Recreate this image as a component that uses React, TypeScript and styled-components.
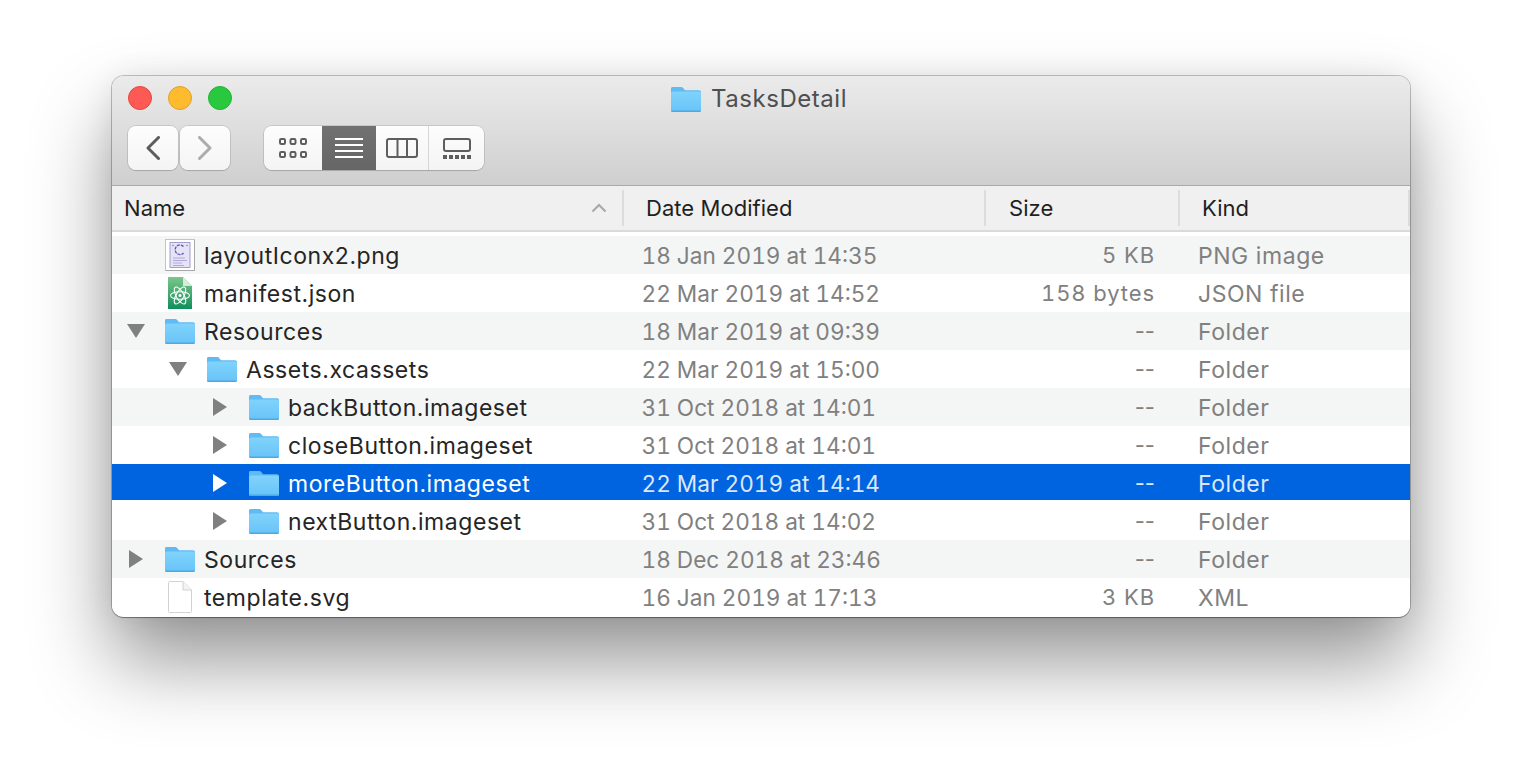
import * as React from "react";
import styled, { createGlobalStyle } from "styled-components";

const GlobalStyle = createGlobalStyle`
  html, body {
    margin: 0;
    background: #fff;
    font-family: Inter, "Noto Sans", sans-serif;
  }
`;

const Page = styled.div`
  width: 1522px;
  height: 766px;
  padding: 76px 0 0 112px;
  box-sizing: border-box;
  overflow: hidden;
`;

const Window = styled.div`
  width: 1298px;
  height: 541px;
  border-radius: 12px;
  background: #fff;
  overflow: hidden;
  box-shadow: 0 0 0 1px rgba(0, 0, 0, 0.22), 0 1px 1px rgba(0, 0, 0, 0.25);
`;

const WindowShadow = styled.div`
  width: 1298px;
  height: 541px;
  border-radius: 12px;
  box-shadow: 0 44px 80px rgba(0, 0, 0, 0.42), 0 0 30px rgba(0, 0, 0, 0.08);
`;

const TitleBar = styled.div`
  height: 110px;
  box-sizing: border-box;
  padding: 10px 16px 0;
  background: linear-gradient(#ebebeb, #cfcfcf);
  border-bottom: 1px solid #a9a9a9;
  display: flex;
  flex-direction: column;
  gap: 16px;
`;

const TitleRow = styled.div`
  display: grid;
  grid-template-columns: 1fr auto 1fr;
  grid-template-rows: 24px;
  align-items: center;
`;

const Lights = styled.div`
  display: flex;
  gap: 16px;
`;

const Light = styled.span<{ $fill: string; $edge: string }>`
  width: 24px;
  height: 24px;
  box-sizing: border-box;
  border-radius: 50%;
  background: ${(p) => p.$fill};
  border: 1px solid ${(p) => p.$edge};
`;

const Title = styled.div`
  display: flex;
  align-items: center;
  gap: 10px;
  font-size: 24px;
  line-height: 24px;
  letter-spacing: 0.55px;
  color: #4f4f4f;
  margin: 2px 0 0 -4px;
`;

const Toolbar = styled.div`
  display: flex;
  gap: 34px;
`;

const NavGroup = styled.div`
  display: flex;
  gap: 2px;
`;

const ToolButton = styled.button`
  width: 50px;
  height: 44px;
  padding: 0;
  border: 0;
  border-radius: 8px;
  background: linear-gradient(#fdfdfd, #f4f4f4);
  box-shadow: 0 0 0 1px rgba(0, 0, 0, 0.1), 0 1px 1px rgba(0, 0, 0, 0.12);
  display: flex;
  align-items: center;
  justify-content: center;
`;

const Segmented = styled.div`
  display: flex;
  height: 44px;
  border-radius: 8px;
  overflow: hidden;
  background: linear-gradient(#fdfdfd, #f4f4f4);
  box-shadow: 0 0 0 1px rgba(0, 0, 0, 0.1), 0 1px 1px rgba(0, 0, 0, 0.12);
`;

const Segment = styled.div<{ $width: number; $active?: boolean; $divider?: boolean }>`
  width: ${(p) => p.$width}px;
  box-sizing: border-box;
  display: flex;
  align-items: center;
  justify-content: center;
  background: ${(p) => (p.$active ? "linear-gradient(#717171, #666)" : "transparent")};
  border-right: ${(p) => (p.$divider ? "1px solid #d6d6d6" : "0")};
`;

const Columns = styled.div`
  display: grid;
  grid-template-columns: 512px 362px 194px 1fr;
`;

const HeaderRow = styled(Columns)`
  height: 46px;
  box-sizing: border-box;
  background: #f0f0f0;
  border-bottom: 2px solid #dadada;
  align-items: center;
`;

const HeaderCell = styled.div<{ $pad: number }>`
  height: 36px;
  box-sizing: border-box;
  padding-left: ${(p) => p.$pad}px;
  padding-right: 15px;
  border-right: 2px solid #dcdcdc;
  display: flex;
  align-items: center;
  justify-content: space-between;
  font-size: 22px;
  letter-spacing: 0.05px;
  color: #1f1f1f;
`;

const Rows = styled.div`
  padding-top: 4px;
`;

const Row = styled(Columns)<{ $alt?: boolean; $selected?: boolean }>`
  height: 38px;
  align-items: center;
  font-size: 23px;
  letter-spacing: 0.55px;
  color: ${(p) => (p.$selected ? "#fff" : "#808080")};
  background: ${(p) =>
    p.$selected
      ? "linear-gradient(#0064e1 36px, #fff 36px)"
      : p.$alt
        ? "#f4f5f5"
        : "#fff"};
`;

const NameCell = styled.div<{ $depth: number; $selected?: boolean }>`
  display: flex;
  align-items: center;
  height: 100%;
  padding-left: ${(p) => 15 + p.$depth * 42}px;
  color: ${(p) => (p.$selected ? "#fff" : "#252525")};
`;

const NameLabel = styled.span`
  margin-top: 2px;
`;

const Disclosure = styled.span<{ $open?: boolean }>`
  width: 38px;
  display: flex;
  align-items: center;
  padding-left: ${(p) => (p.$open ? 0 : 2)}px;
  box-sizing: border-box;
`;

const FileIcon = styled.span`
  width: 30px;
  height: 32px;
  display: flex;
  align-items: center;
  justify-content: center;
  margin-right: 9px;
`;

const DateCell = styled.div<{ $selected?: boolean }>`
  padding-left: 17.5px;
  font-size: 22.6px;
  font-variant-numeric: tabular-nums;
  letter-spacing: 0;
  color: ${(p) => (p.$selected ? "#dbe8fb" : "inherit")};
`;

const SizeCell = styled.div<{ $selected?: boolean }>`
  padding-right: 25px;
  text-align: right;
  font-size: 22px;
  font-variant-numeric: tabular-nums;
  letter-spacing: 0.9px;
  color: ${(p) => (p.$selected ? "#dbe8fb" : "inherit")};
`;

const Dash = styled.span`
  font-variant-numeric: normal;
  letter-spacing: 0;
`;

const KindCell = styled.div<{ $selected?: boolean }>`
  padding-left: 18px;
  margin-top: 2px;
  color: ${(p) => (p.$selected ? "#dbe8fb" : "inherit")};
`;

function FolderIcon() {
  const id = React.useId();
  return (
    <svg width="30" height="25" viewBox="0 0 30 25">
      <defs>
        <linearGradient id={id} x1="0" y1="0" x2="0" y2="1">
          <stop offset="0" stopColor="#80d3fc" />
          <stop offset="1" stopColor="#68c3f7" />
        </linearGradient>
      </defs>
      <path
        d="M1.500 0h8.500c1.200 0 1.800 0.500 2.600 1.500l1.400 1.800h14c1.200 0 2 0.800 2 2v17.700c0 1.200-0.800 2-2 2H2c-1.200 0-2-0.800-2-2V1.500C0 0.600 0.600 0 1.500 0z"
        fill="#5fbbf3"
      />
      <path
        d="M0 6.500c0-1.200 0.800-2 2-2h26c1.200 0 2 0.800 2 2V23c0 1.200-0.800 2-2 2H2c-1.200 0-2-0.800-2-2z"
        fill={`url(#${id})`}
      />
      <path d="M0 23.500h30c0 0.900-0.800 1.500-2 1.500H2c-1.200 0-2-0.600-2-1.500z" fill="#4ba9e3" />
    </svg>
  );
}

function TriangleIcon({ open, color }: { open?: boolean; color: string }) {
  return open ? (
    <svg width="18" height="14" viewBox="0 0 18 14">
      <path d="M0 0h18L9 14z" fill={color} />
    </svg>
  ) : (
    <svg width="14" height="18" viewBox="0 0 14 18">
      <path d="M0 0l14 9L0 18z" fill={color} />
    </svg>
  );
}

function PngThumb() {
  return (
    <svg width="30" height="32" viewBox="0 0 30 32">
      <rect x="0.500" y="0.500" width="29" height="31" fill="#fff" stroke="#c4c4c4" />
      <path d="M1 31.500h28.500V1" fill="none" stroke="#a8a8a8" />
      <rect x="5" y="3.500" width="20" height="25" fill="#e6e3f6" stroke="#9089c8" strokeWidth="0.800" />
      <path d="M18.500 7.500a4.800 4.800 0 1 0 0 6.500" fill="none" stroke="#5d52b5" strokeWidth="1.300" strokeDasharray="3 1" />
      <circle cx="8" cy="6.500" r="0.800" fill="#7a72c2" />
      <circle cx="22" cy="6.500" r="0.800" fill="#7a72c2" />
      <path d="M8 19h12M8 21.500h14M8 24h9M8 26.500h11" stroke="#a8a2d8" strokeWidth="0.900" />
    </svg>
  );
}

function AtomDoc() {
  const id = React.useId();
  return (
    <svg width="24" height="32" viewBox="0 0 24 32">
      <defs>
        <linearGradient id={id} x1="0" y1="0" x2="0" y2="1">
          <stop offset="0" stopColor="#7cc68c" />
          <stop offset="1" stopColor="#0f8f5a" />
        </linearGradient>
      </defs>
      <path d="M0 0h15l9 9v23H0z" fill={`url(#${id})`} />
      <path d="M15 0l9 9h-9z" fill="#d6ebd9" />
      <g fill="none" stroke="#fff" strokeWidth="1.100">
        <ellipse cx="12" cy="18.500" rx="9.500" ry="3.800" />
        <ellipse cx="12" cy="18.500" rx="9.500" ry="3.800" transform="rotate(60 12 18.500)" />
        <ellipse cx="12" cy="18.500" rx="9.500" ry="3.800" transform="rotate(120 12 18.500)" />
      </g>
      <circle cx="12" cy="18.500" r="1.500" fill="#fff" />
    </svg>
  );
}

function BlankDoc() {
  return (
    <svg width="24" height="32" viewBox="0 0 24 32">
      <path
        d="M0.500 1.500a1 1 0 0 1 1-1H15l8.500 8.500v21.500a1 1 0 0 1-1 1h-21a1 1 0 0 1-1-1z"
        fill="#fff"
        stroke="#d2d2d2"
      />
      <path d="M15 0.500V9h8.500" fill="#f3f3f3" stroke="#d2d2d2" />
    </svg>
  );
}

function Chevron({ dir, color }: { dir: "left" | "right"; color: string }) {
  return (
    <svg width="14" height="24" viewBox="0 0 14 24">
      <path
        d={dir === "left" ? "M12.500 1.500L2 12l10.500 10.500" : "M1.500 1.500L12 12 1.500 22.500"}
        fill="none"
        stroke={color}
        strokeWidth="3"
        strokeLinecap="round"
        strokeLinejoin="round"
      />
    </svg>
  );
}

function GridGlyph() {
  const cells = [0, 10.5, 21];
  return (
    <svg width="28" height="20" viewBox="0 0 28 20">
      {[0, 13].map((y) =>
        cells.map((x) => (
          <rect
            key={`${x}-${y}`}
            x={x + 1}
            y={y + 1}
            width="5"
            height="5"
            rx="1.200"
            fill="none"
            stroke="#5e5e5e"
            strokeWidth="2"
          />
        )),
      )}
    </svg>
  );
}

function ListGlyph() {
  return (
    <svg width="28" height="20" viewBox="0 0 28 20">
      <path d="M0 1h28M0 7h28M0 13h28M0 19h28" stroke="#fff" strokeWidth="2" />
    </svg>
  );
}

function ColumnGlyph() {
  return (
    <svg width="32" height="20" viewBox="0 0 32 20">
      <rect x="1" y="1" width="30" height="18" rx="2" fill="none" stroke="#5e5e5e" strokeWidth="2" />
      <path d="M11.500 1v18M21 1v18" stroke="#5e5e5e" strokeWidth="2" />
    </svg>
  );
}

function GalleryGlyph() {
  return (
    <svg width="28" height="21" viewBox="0 0 28 21">
      <rect x="1" y="1" width="26" height="12" rx="2" fill="none" stroke="#5e5e5e" strokeWidth="2" />
      {[0, 6, 12, 18, 24].map((x) => (
        <rect key={x} x={x} y="17" width="4" height="4" fill="#5e5e5e" />
      ))}
    </svg>
  );
}

type Entry = {
  name: string;
  depth: number;
  date: string;
  size: string;
  kind: string;
  icon: "folder" | "png" | "json" | "doc";
  open?: boolean;
  selected?: boolean;
};

const entries: Entry[] = [
  { name: "layoutIconx2.png", depth: 0, date: "18 Jan 2019 at 14:35", size: "5 KB", kind: "PNG image", icon: "png" },
  { name: "manifest.json", depth: 0, date: "22 Mar 2019 at 14:52", size: "158 bytes", kind: "JSON file", icon: "json" },
  { name: "Resources", depth: 0, date: "18 Mar 2019 at 09:39", size: "--", kind: "Folder", icon: "folder", open: true },
  { name: "Assets.xcassets", depth: 1, date: "22 Mar 2019 at 15:00", size: "--", kind: "Folder", icon: "folder", open: true },
  { name: "backButton.imageset", depth: 2, date: "31 Oct 2018 at 14:01", size: "--", kind: "Folder", icon: "folder" },
  { name: "closeButton.imageset", depth: 2, date: "31 Oct 2018 at 14:01", size: "--", kind: "Folder", icon: "folder" },
  { name: "moreButton.imageset", depth: 2, date: "22 Mar 2019 at 14:14", size: "--", kind: "Folder", icon: "folder", selected: true },
  { name: "nextButton.imageset", depth: 2, date: "31 Oct 2018 at 14:02", size: "--", kind: "Folder", icon: "folder" },
  { name: "Sources", depth: 0, date: "18 Dec 2018 at 23:46", size: "--", kind: "Folder", icon: "folder" },
  { name: "template.svg", depth: 0, date: "16 Jan 2019 at 17:13", size: "3 KB", kind: "XML", icon: "doc" },
];

function EntryIcon({ icon }: { icon: Entry["icon"] }) {
  if (icon === "folder") return <FolderIcon />;
  if (icon === "png") return <PngThumb />;
  if (icon === "json") return <AtomDoc />;
  return <BlankDoc />;
}

export default function App() {
  return (
    <Page>
      <GlobalStyle />
      <WindowShadow>
        <Window>
          <TitleBar>
            <TitleRow>
              <Lights>
                <Light $fill="#fd5a55" $edge="#e5453f" />
                <Light $fill="#febb2e" $edge="#e2a02a" />
                <Light $fill="#28c93f" $edge="#22b236" />
              </Lights>
              <Title>
                <FolderIcon />
                TasksDetail
              </Title>
            </TitleRow>
            <Toolbar>
              <NavGroup>
                <ToolButton>
                  <Chevron dir="left" color="#5c5c5c" />
                </ToolButton>
                <ToolButton>
                  <Chevron dir="right" color="#acacac" />
                </ToolButton>
              </NavGroup>
              <Segmented>
                <Segment $width={58}>
                  <GridGlyph />
                </Segment>
                <Segment $width={54} $active>
                  <ListGlyph />
                </Segment>
                <Segment $width={53} $divider>
                  <ColumnGlyph />
                </Segment>
                <Segment $width={55}>
                  <GalleryGlyph />
                </Segment>
              </Segmented>
            </Toolbar>
          </TitleBar>
          <HeaderRow>
            <HeaderCell $pad={12}>
              Name
              <svg width="16" height="10" viewBox="0 0 16 10">
                <path d="M1.500 8.500L8 2l6.500 6.500" fill="none" stroke="#a9a9a9" strokeWidth="2.200" />
              </svg>
            </HeaderCell>
            <HeaderCell $pad={22}>Date Modified</HeaderCell>
            <HeaderCell $pad={23}>Size</HeaderCell>
            <HeaderCell $pad={22}>Kind</HeaderCell>
          </HeaderRow>
          <Rows>
            {entries.map((entry, index) => (
              <Row key={entry.name} $alt={index % 2 === 0} $selected={entry.selected}>
                <NameCell $depth={entry.depth} $selected={entry.selected}>
                  <Disclosure $open={entry.open}>
                    {entry.icon === "folder" && (
                      <TriangleIcon open={entry.open} color={entry.selected ? "#fff" : "#808080"} />
                    )}
                  </Disclosure>
                  <FileIcon>
                    <EntryIcon icon={entry.icon} />
                  </FileIcon>
                  <NameLabel>{entry.name}</NameLabel>
                </NameCell>
                <DateCell $selected={entry.selected}>{entry.date}</DateCell>
                <SizeCell $selected={entry.selected}>
                  {entry.size === "--" ? <Dash>--</Dash> : entry.size}
                </SizeCell>
                <KindCell $selected={entry.selected}>{entry.kind}</KindCell>
              </Row>
            ))}
          </Rows>
        </Window>
      </WindowShadow>
    </Page>
  );
}
